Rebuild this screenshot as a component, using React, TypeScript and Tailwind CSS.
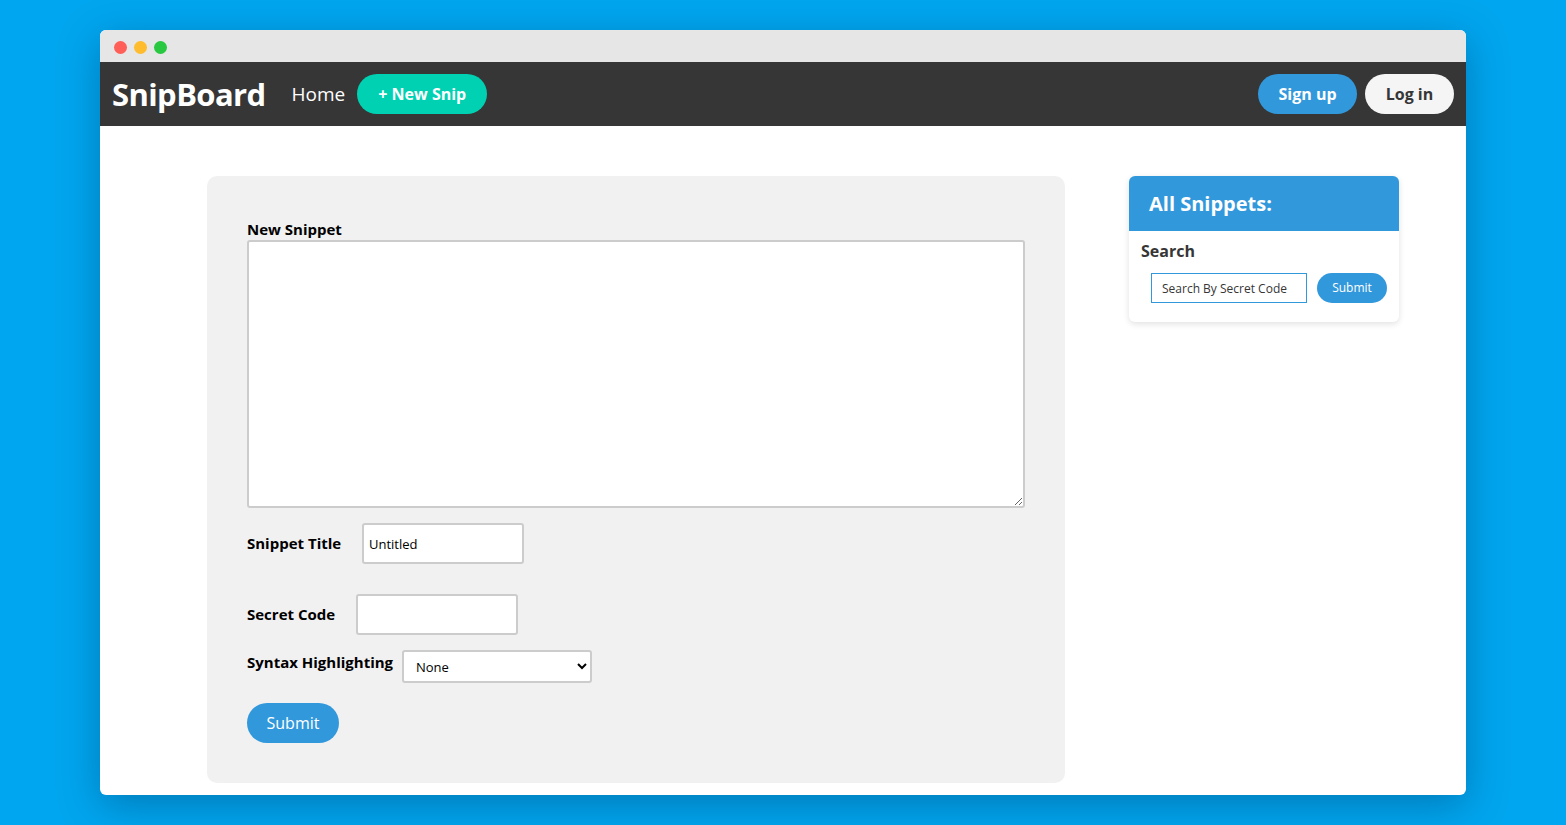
import React from 'react';

const Navbar: React.FC = () => (
  <nav className="h-16 bg-[#363636] flex items-center justify-between px-3">
    <div className="flex items-center">
      <span className="text-[31px] font-bold text-white tracking-[-0.6px] leading-none">SnipBoard</span>
      <a className="ml-[26px] text-[19px] text-white">Home</a>
      <button className="ml-3 h-10 px-[21px] rounded-full bg-[#00d1b2] text-white font-bold text-[16px]">+ New Snip</button>
    </div>
    <div className="flex items-center gap-2">
      <button className="h-10 w-[99px] rounded-full bg-[#3298dc] text-white font-bold text-[16px]">Sign up</button>
      <button className="h-10 w-[89px] rounded-full bg-[#f5f5f5] text-[#363636] font-bold text-[16px]">Log in</button>
    </div>
  </nav>
);

const SnippetForm: React.FC = () => (
  <div className="w-[858px] h-[607px] bg-[#f1f1f1] rounded-[10px] px-10 pt-[42px]">
    <label className="block font-bold text-[15px] text-black leading-[22px]">New Snippet</label>
    <textarea className="block w-[778px] h-[268px] bg-white border-2 border-[#cccccc] rounded-[3px] resize-y" />

    <div className="flex items-center mt-[15px]">
      <span className="font-bold text-[15px] text-black w-[115px]">Snippet Title</span>
      <input
        defaultValue="Untitled"
        className="w-[162px] h-[41px] bg-white border-2 border-[#cccccc] rounded-[3px] px-[5px] text-[13px] text-black outline-none"
      />
    </div>

    <div className="flex items-center mt-[30px]">
      <span className="font-bold text-[15px] text-black w-[109px]">Secret Code</span>
      <input className="w-[162px] h-[41px] bg-white border-2 border-[#cccccc] rounded-[3px] px-[5px] text-[13px] outline-none" />
    </div>

    <div className="flex items-start mt-[15px]">
      <span className="font-bold text-[15px] text-black w-[155px] leading-6">Syntax Highlighting</span>
      <select className="w-[190px] h-[33px] bg-white border-2 border-[#cccccc] rounded-[3px] pl-2 text-[13px] text-black">
        <option>None</option>
      </select>
    </div>

    <button className="mt-5 h-10 w-[92px] rounded-full bg-[#3298dc] text-white text-[16px]">Submit</button>
  </div>
);

const Sidebar: React.FC = () => (
  <div className="w-[270px] bg-white rounded-[6px] shadow-[0_2px_6px_rgba(0,0,0,0.12)] overflow-hidden self-start">
    <div className="h-[55px] bg-[#3298dc] flex items-center px-5">
      <span className="text-white font-bold text-[20px]">All Snippets:</span>
    </div>
    <div className="px-3 pt-[8px] pb-[19px]">
      <div className="font-bold text-[16px] text-[#363636]">Search</div>
      <div className="flex items-center mt-[10px] pl-[10px]">
        <input
          placeholder="Search By Secret Code"
          className="w-[156px] h-[30px] border border-[#3298dc] px-[10px] text-[12px] placeholder:text-[#363636] outline-none"
        />
        <button className="ml-[10px] h-[30px] w-[70px] rounded-full bg-[#3298dc] text-white text-[12px]">Submit</button>
      </div>
    </div>
  </div>
);

export default function App() {
  return (
    <div
      className="w-[1566px] h-[825px] bg-[#00a6ef] pt-[30px] pl-[100px] overflow-hidden"
      style={{ fontFamily: '"Open Sans", "Noto Sans", sans-serif' }}
    >
      <div className="w-[1366px] h-[765px] bg-white rounded-[6px] overflow-hidden shadow-[0_10px_40px_rgba(0,40,80,0.35)] flex flex-col">
        <div className="h-8 bg-[#e6e6e6] flex items-center gap-[7px] pl-[14px] pt-[2px]">
          <span className="w-[13px] h-[13px] rounded-full bg-[#ff5f57]" />
          <span className="w-[13px] h-[13px] rounded-full bg-[#febc2e]" />
          <span className="w-[13px] h-[13px] rounded-full bg-[#28c840]" />
        </div>
        <Navbar />
        <main className="flex gap-16 pl-[107px] pt-[50px]">
          <SnippetForm />
          <Sidebar />
        </main>
      </div>
    </div>
  );
}
